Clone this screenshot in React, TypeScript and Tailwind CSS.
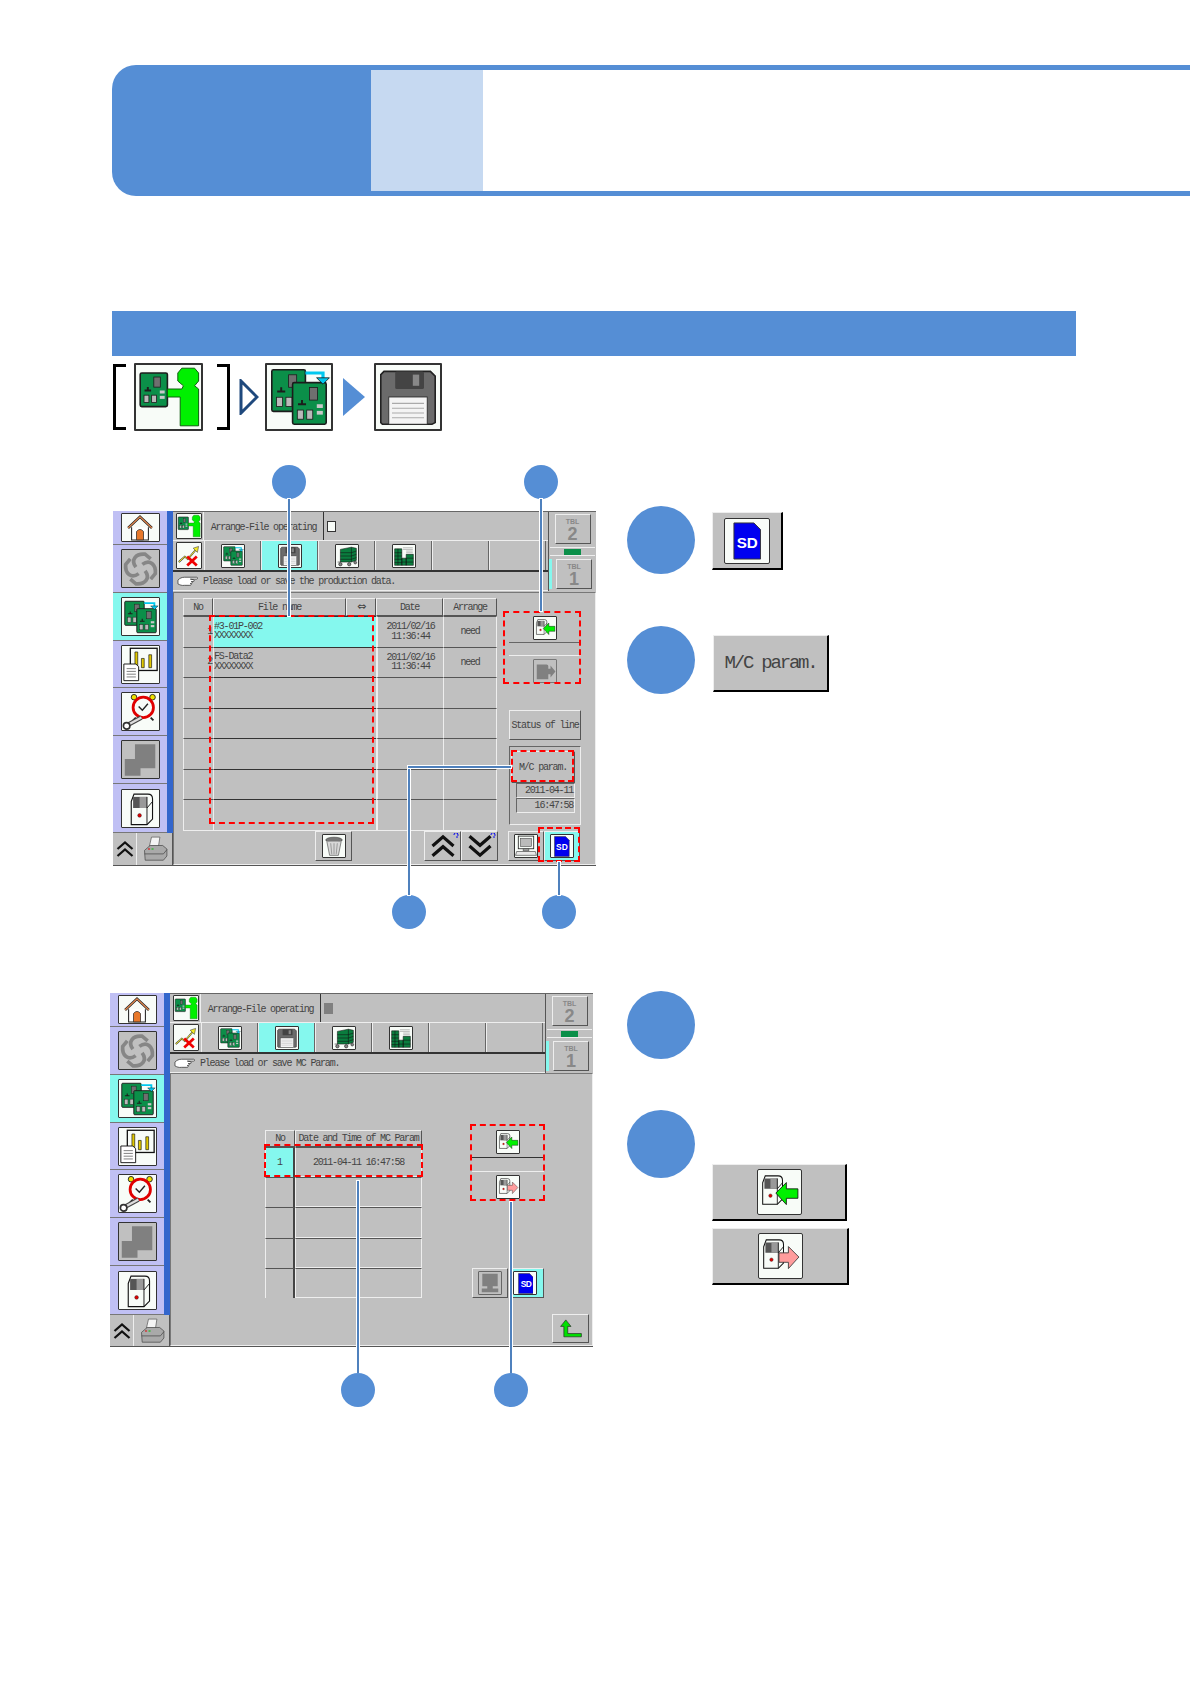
import type { ReactNode } from "react";

const raised = "border border-t-[#eeeeee] border-l-[#eeeeee] border-r-[#555555] border-b-[#555555]";
const mono = "font-['Liberation_Mono',monospace] text-[10px] tracking-[-1.2px] text-[#444444]";

function Ico({ children, size = 38 }: { children: ReactNode; size?: number }) {
  return (
    <svg viewBox="0 0 40 40" width={size} height={size} className="block">
      {children}
    </svg>
  );
}

function Pcb({ x, y, w, h }: { x: number; y: number; w: number; h: number }) {
  return (
    <g>
      <rect x={x} y={y} width={w} height={h} rx="1" fill="#0b8f49" stroke="#1c1c1c" strokeWidth="1" />
      <rect x={x + w * 0.5} y={y + h * 0.12} width={w * 0.24} height={h * 0.3} fill="#6f6f6f" stroke="#1c1c1c" strokeWidth="0.5" />
      <rect x={x + w * 0.14} y={y + h * 0.66} width={w * 0.18} height={h * 0.22} fill="#b9b9b9" stroke="#1c1c1c" strokeWidth="0.5" />
      <rect x={x + w * 0.42} y={y + h * 0.66} width={w * 0.18} height={h * 0.22} fill="#b9b9b9" stroke="#1c1c1c" strokeWidth="0.5" />
      <path d={`M${x + w * 0.16} ${y + h * 0.52}h${w * 0.24}M${x + w * 0.28} ${y + h * 0.52}v-${h * 0.1}`} stroke="#1c1c1c" strokeWidth="1.2" />
      <rect x={x + w * 0.72} y={y + h * 0.52} width={w * 0.18} height={h * 0.09} fill="#c8c8c8" />
      <rect x={x + w * 0.72} y={y + h * 0.68} width={w * 0.18} height={h * 0.09} fill="#c8c8c8" />
    </g>
  );
}

const Person = ({ size = 26 }: { size?: number }) => (
  <Ico size={size}>
    <Pcb x={2} y={5} w={17} h={21} />
    <path d="M28 2h8l2.5 3v5L36 13l2.5 2v23H27V20h-8v-5h9l1-2-3.500-3V5z" fill="#00f000" stroke="#0a5a0a" strokeWidth="0.6" />
  </Ico>
);

const TwoBoards = ({ size = 38 }: { size?: number }) => (
  <Ico size={size}>
    <Pcb x={3} y={3} w={21} h={26} />
    <Pcb x={16} y={11} w={21} h={26} />
    <path d="M24 5h11v5" fill="none" stroke="#00c8f0" strokeWidth="2" />
    <path d="M31 8h8l-4 4z" fill="#00c8f0" stroke="#111" strokeWidth="0.5" />
  </Ico>
);

const Floppy = ({ size = 24 }: { size?: number }) => (
  <Ico size={size}>
    <path d="M3 6l2-2h29l3 3v29l-2 1H4l-1-1z" fill="#6b6b6b" stroke="#222" strokeWidth="1" />
    <rect x="12" y="4" width="18" height="11" rx="1" fill="#444" />
    <rect x="23" y="6" width="4" height="7" fill="#888" />
    <rect x="8" y="20" width="24" height="17" fill="#f4f4f4" stroke="#222" strokeWidth="0.5" />
    <path d="M10 24h20M10 27h20M10 30h20M10 33h20" stroke="#aaa" strokeWidth="0.7" />
  </Ico>
);

const Cart = ({ size = 22 }: { size?: number }) => (
  <Ico size={size}>
    <path d="M8 8 28 4l9 2v22l-9 3H8z" fill="#0a7d3e" stroke="#111" />
    <path d="M8 14h20l9-3M8 20h20l9-3M8 26h20l9-3M28 4v27" stroke="#111" fill="none" />
    <path d="M8 31H3" stroke="#111" />
    <circle cx="8" cy="35" r="3" fill="#888" stroke="#111" />
    <circle cx="24" cy="35" r="3" fill="#888" stroke="#111" />
    <circle cx="35" cy="32" r="2.5" fill="#888" stroke="#111" />
  </Ico>
);

const Trend = ({ size = 24 }: { size?: number }) => (
  <Ico size={size}>
    <path d="M18 5h18M18 8h18M24 11h12M24 14h12" stroke="#888" strokeWidth="1" />
    <path d="M3 7h13v30H3zM16 24h8v13h-8zM24 17h13v20H24z" fill="#0a7d3e" stroke="#111" />
    <path d="M3 14h13M3 20h13M3 26h13M3 32h13M24 24h13M24 31h13M16 31h8M9 7v30" stroke="#111" />
  </Ico>
);

const ExitIcon = () => (
  <Ico size={26}>
    <path d="M3 30 13 21l5 4 13-15" fill="none" stroke="#444" strokeWidth="3" />
    <path d="M3 30 13 21l5 4 13-15" fill="none" stroke="#f4ea20" strokeWidth="1.6" />
    <path d="M27 7l9-3-2 10z" fill="#f4ea20" stroke="#444" />
    <path d="M17 21 33 36M33 21 17 36" stroke="#f00000" strokeWidth="4.5" />
  </Ico>
);

const Home = () => (
  <Ico size={28}>
    <path d="M3 20 20 4l17 16" fill="none" stroke="#222" strokeWidth="3.5" />
    <path d="M3 20 20 4l17 16" fill="none" stroke="#e98a50" strokeWidth="1.6" />
    <path d="M8 19v18h24V19" fill="#fff" stroke="#222" strokeWidth="1.5" />
    <path d="M15 37V25q5-6 10 0v12z" fill="#e8782c" stroke="#222" />
  </Ico>
);

const Fan = () => (
  <Ico>
    <g fill="none" stroke="#868686" strokeWidth="4">
      {[0, 90, 180, 270].map((a) => (
        <path key={a} d="M15 18C9 10 15 3 25 4l6 5" transform={`rotate(${a} 20 20)`} />
      ))}
    </g>
  </Ico>
);

const ReportChart = () => (
  <Ico>
    <rect x="9" y="3" width="29" height="24" fill="#f8fcf8" stroke="#111" strokeWidth="1.4" />
    <path d="M14 24V7h3v17zM21 24V14h3v10zM29 24V10h3v14z" fill="#e0c800" stroke="#111" strokeWidth="0.7" />
    <path d="M2 20h13l3 3v15H2z" fill="#fff" stroke="#111" />
    <path d="M5 25h10M5 28h10M5 31h10M5 34h10" stroke="#555" strokeWidth="0.8" />
  </Ico>
);

const AlarmTool = () => (
  <Ico>
    <circle cx="13" cy="4" r="3" fill="#f0e000" stroke="#222" />
    <circle cx="33" cy="4" r="3" fill="#f0e000" stroke="#222" />
    <circle cx="23" cy="15" r="11" fill="#f8fcf8" stroke="#e00000" strokeWidth="3" />
    <path d="M18 14l4 4 6-7" fill="none" stroke="#222" strokeWidth="1.5" />
    <path d="M15 26l-3 3M31 26l3 3" stroke="#222" strokeWidth="2" />
    <path d="M6 34 21 26" stroke="#444" strokeWidth="5" />
    <path d="M6 34 21 26" stroke="#ddd" strokeWidth="2.5" />
    <circle cx="5" cy="35" r="3.5" fill="#fff" stroke="#333" strokeWidth="1.8" />
  </Ico>
);

const Squares = () => (
  <Ico>
    <path d="M14 3h22v26H20v8H3V19h11z" fill="#808080" />
  </Ico>
);

const MachineShape = ({ x = 7, scale = 1 }: { x?: number; scale?: number }) => (
  <g transform={`translate(${x} 3) scale(${scale})`}>
    <path d="M3 10 6 2h15q5 0 5 5v22l-6 6H3z" fill="#f8fcf8" stroke="#111" strokeWidth="1.2" />
    <path d="M5 5h15v12H5z" fill="#555" />
    <path d="M12 5h8v12h-8z" fill="#999" />
    <path d="M20 5V35M20 17l6-7" stroke="#111" fill="none" />
    <circle cx="12" cy="25" r="2" fill="#e00000" stroke="#333" strokeWidth="0.5" />
  </g>
);

const Load = ({ size = 22 }: { size?: number }) => (
  <Ico size={size}>
    <MachineShape x={2} scale={0.82} />
    <path d="M17 21 27 11v6h11v9H27v6z" fill="#00f000" stroke="#111" strokeWidth="0.8" />
  </Ico>
);

const Save = ({ size = 22 }: { size?: number }) => (
  <Ico size={size}>
    <MachineShape x={2} scale={0.82} />
    <path d="M38 21 28 11v6H19v9h9v6z" fill="#ff9c9c" stroke="#333" strokeWidth="0.8" />
  </Ico>
);

const SaveOff = () => (
  <Ico size={22}>
    <path d="M5 8h18q3 0 3 3v5h4v-6l9 11-9 11v-6h-4v9H5z" fill="#808080" />
  </Ico>
);

const Chevrons = ({ down, size = 28 }: { down?: boolean; size?: number }) => (
  <Ico size={size}>
    <g fill="none" stroke="#111" strokeWidth="4.5" transform={down ? "rotate(180 20 20)" : undefined}>
      <path d="M5 20 20 7l15 13" />
      <path d="M5 34 20 21l15 13" />
    </g>
  </Ico>
);

const Printer = () => (
  <Ico size={28}>
    <path d="M15 3h12l-2 13H12z" fill="#f4f4f4" stroke="#555" />
    <path d="M5 22 13 15h18l6 5v10l-5 6H6z" fill="#a9a9a9" stroke="#444" />
    <path d="M5 27h27l5-6" fill="none" stroke="#444" />
    <path d="M10 20h3" stroke="#e00000" strokeWidth="1.4" />
    <path d="M15 20h3" stroke="#00c000" strokeWidth="1.4" />
  </Ico>
);

const Trash = () => (
  <Ico size={22}>
    <ellipse cx="20" cy="9" rx="15" ry="5" fill="#777" stroke="#333" />
    <path d="M7 12l5 25h16l5-25" fill="#d8d8d8" stroke="#333" />
    <path d="M14 15l2 20M20 15v20M26 15l-2 20" stroke="#666" />
  </Ico>
);

const Computer = ({ off }: { off?: boolean }) => (
  <Ico size={22}>
    {off ? (
      <path d="M6 3h28v23h-9v4h10v7H5v-7h10v-4H6z" fill="#808080" />
    ) : (
      <>
        <rect x="6" y="2" width="28" height="23" fill="#f8fcf8" stroke="#222" strokeWidth="1.5" />
        <rect x="10" y="6" width="20" height="15" fill="#bbb" stroke="#444" />
        <path d="M15 25h10v4H15z" fill="#aaa" stroke="#333" />
        <path d="M3 30h34l2 7H1z" fill="#e8e8e8" stroke="#222" />
      </>
    )}
  </Ico>
);

function SdCard({ size = 21 }: { size?: number }) {
  return (
    <svg viewBox="0 0 30 40" width={size * 0.75} height={size} className="block">
      <path d="M1 1h21l7 7v31H1z" fill="#0000f0" stroke="#333" strokeWidth="1" />
      <text x="15" y="27" textAnchor="middle" fontSize="16" fontWeight="700" fill="#fff" fontFamily="'Liberation Sans', sans-serif">
        SD
      </text>
    </svg>
  );
}

const Hand = () => (
  <svg viewBox="0 0 22 12" width="21" height="12" className="block shrink-0">
    <path
      d="M1 4C3 2 5 1 8 1h12.5a1 1 0 0 1 0 2H14l3 .5a1 1 0 0 1 0 2h-2a1 1 0 0 1 0 2h-1a1 1 0 0 1-.5 2H8C5 10 3 9 1 8z"
      fill="#fff"
      stroke="#333"
      strokeWidth="0.8"
    />
  </svg>
);

const ReturnArrow = () => (
  <Ico size={26}>
    <path d="M12 6 4 16h5v16h27v-5H15V16h5z" fill="#00e000" stroke="#222" strokeWidth="1" />
  </Ico>
);

const Hook = () => (
  <svg viewBox="0 0 6 6" width="6" height="6" className="absolute right-[1px] top-[1px] block">
    <path d="M1 2a2 2 0 1 1 3 1.500V5" fill="none" stroke="#0000f0" strokeWidth="1" />
  </svg>
);

function Frame({ children, className = "", bg = "bg-[#f8fcf8]" }: { children: ReactNode; className?: string; bg?: string }) {
  return (
    <div className={`flex items-center justify-center overflow-hidden rounded-[1px] border border-[#333333] ${bg} ${className}`}>
      {children}
    </div>
  );
}

function Dot({ className }: { className: string }) {
  return <div className={`absolute h-[34px] w-[34px] rounded-full bg-[#558ed5] ${className}`} />;
}

function Line({ className }: { className: string }) {
  return <div className={`absolute bg-[#4f81bd] shadow-[0_0_0_1px_#ffffff] ${className}`} />;
}

function Sidebar() {
  const rows = [
    { h: "h-[34px]", icon: <Home />, box: "h-[29px]" },
    { h: "h-[48px]", icon: <Fan />, box: "h-[39px]", off: true },
    { h: "h-[48px]", icon: <TwoBoards />, box: "h-[39px]", on: true },
    { h: "h-[47px]", icon: <ReportChart />, box: "h-[39px]" },
    { h: "h-[48px]", icon: <AlarmTool />, box: "h-[39px]" },
    { h: "h-[48px]", icon: <Squares />, box: "h-[39px]", off: true },
    { h: "h-[49px]", icon: <Ico><MachineShape /></Ico>, box: "h-[39px]" },
  ];
  return (
    <div className="flex h-full w-[60px] shrink-0 flex-col">
      <div className="flex flex-1 flex-col border-r-[6px] border-[#3366cc]">
        {rows.map((r, i) => (
          <div
            key={i}
            className={`flex items-center justify-center border-b border-[#777777] ${r.h} ${r.on ? "bg-[#85f8ee]" : "bg-[#c0c0f4]"}`}
          >
            <Frame className={`w-[39px] ${r.box}`} bg={r.off ? "bg-[#c0c0c0]" : "bg-[#f8fcf8]"}>
              {r.icon}
            </Frame>
          </div>
        ))}
      </div>
      <div className="flex h-[32px] border-r border-[#555555] bg-[#c0c0c0]">
        <div className="flex w-[24px] items-center justify-center border-r border-[#eeeeee]">
          <Chevrons size={20} />
        </div>
        <div className="flex flex-1 items-center justify-center">
          <Printer />
        </div>
      </div>
    </div>
  );
}

function TblButton({ n, on }: { n: string; on?: boolean }) {
  return (
    <div className={`flex flex-1 justify-center ${on ? "border-l-[3px] border-[#85f8ee]" : ""}`}>
      <div className={`flex w-[36px] flex-col items-center ${raised} font-['Liberation_Sans',sans-serif] font-bold leading-none text-[#888888]`}>
        <span className="mt-[3px] text-[7px]">TBL</span>
        <span className="text-[18px]">{n}</span>
      </div>
    </div>
  );
}

function TopBars({ msg, docDim }: { msg: string; docDim?: boolean }) {
  const tabs = [
    <TwoBoards key="a" size={24} />,
    <Floppy key="b" />,
    <Cart key="c" />,
    <Trend key="d" />,
    null,
    null,
  ];
  return (
    <div className="flex shrink-0 border-t border-[#666666]">
      <div className="flex w-[375px] flex-col">
        <div className="flex h-[29px] border-b border-[#eeeeee]">
          <Frame className="my-[1px] ml-[3px] mr-[1px] h-[26px] w-[26px] border-[#00a000]">
            <Person />
          </Frame>
          <div className={`flex w-[121px] items-center justify-center border-x border-l-[#eeeeee] border-r-[#333333] pt-[2px] ${mono}`}>
            Arrange-File operating
          </div>
          <div className="flex items-center pl-[3px]">
            {docDim ? (
              <div className="h-[11px] w-[9px] bg-[#808080]" />
            ) : (
              <div className="h-[11px] w-[9px] border border-[#333333] bg-[#f8fcf8]" />
            )}
          </div>
        </div>
        <div className="flex h-[31px] border-b-2 border-[#333333]">
          <Frame className="my-[1px] ml-[3px] mr-[2px] w-[26px]">
            <ExitIcon />
          </Frame>
          {tabs.map((icon, i) => (
            <div
              key={i}
              className={`flex h-full w-[57px] items-center justify-center border-r border-l border-l-[#eeeeee] border-r-[#666666] ${i === 1 ? "bg-[#85f8ee]" : ""}`}
            >
              {icon && <Frame className="h-[24px] w-[24px]">{icon}</Frame>}
            </div>
          ))}
        </div>
        <div className={`flex h-[19px] items-center gap-[5px] border-b border-[#eeeeee] pl-[4px] pt-[1px] ${mono}`}>
          <Hand />
          {msg}
        </div>
      </div>
      <div className="flex w-[48px] flex-col border-l border-[#555555] py-[2px]">
        <TblButton n="2" />
        <div className="mx-[1px] my-[3px] flex h-[9px] items-center justify-center border-y border-[#eeeeee]">
          <div className="h-[6px] w-[17px] bg-[#0b8f49]" />
        </div>
        <TblButton n="1" on />
      </div>
    </div>
  );
}

function Cell({ className = "", children }: { className?: string; children?: ReactNode }) {
  return (
    <div className={`flex items-center justify-center border-l border-t border-l-[#eeeeee] border-t-[#555555] ${className}`}>
      {children}
    </div>
  );
}

function Screen1() {
  const rows = [0, 1, 2, 3, 4, 5, 6];
  return (
    <div className="relative h-[355px] w-[483px] shrink-0 border-b border-[#555555] bg-[#c0c0c0]">
      <div className="flex h-full">
        <Sidebar />
        <div className="flex min-w-0 flex-1 flex-col">
          <TopBars msg="Please load or save the production data." />
          <div className="mt-[1px] flex flex-1 flex-col border border-t-[#777777] border-l-[#777777] border-r-[#eeeeee] border-b-[#eeeeee]">
            <div className="flex h-[236px]">
              <div className={`ml-[9px] mt-[5px] ${mono}`}>
                <div className="grid grid-cols-[30px_133px_30px_67px_54px] grid-rows-[18px]">
                  <Cell className={raised}>No</Cell>
                  <Cell className={raised}>File name</Cell>
                  <Cell className={`${raised} font-['DejaVu_Sans',sans-serif] text-[11px]`}>⇔</Cell>
                  <Cell className={raised}>Date</Cell>
                  <Cell className={raised}>Arrange</Cell>
                </div>
                <div className="border-b border-[#eeeeee]">
                  {rows.map((r) => (
                    <div key={r} className="grid h-[30.5px] grid-cols-[30px_133px_30px_67px_54px]">
                      <Cell className="justify-end pb-[1px] pr-[1px]">{r < 2 ? r + 1 : ""}</Cell>
                      <div className={`col-span-2 flex flex-col justify-center border-l border-t border-l-[#eeeeee] border-t-[#333333] pb-[1px] leading-[9.5px] ${r === 0 ? "bg-[#85f8ee]" : ""}`}>
                        {r === 0 && <><span>#3-01P-002</span><span>XXXXXXXX</span></>}
                        {r === 1 && <><span>FS-Data2</span><span>XXXXXXXX</span></>}
                      </div>
                      <Cell className="flex-col border-l-2 border-l-[#666666] leading-[9.5px]">
                        {r < 2 && <><span>2011/02/16</span><span>11:36:44</span></>}
                      </Cell>
                      <Cell className="border-r border-r-[#eeeeee]">{r < 2 ? "need" : ""}</Cell>
                    </div>
                  ))}
                </div>
              </div>
              <div className={`ml-[12px] flex w-[72px] flex-col pt-[20px] ${mono}`}>
                <div className="flex h-[30px] items-center justify-center border-b border-b-[#666666]">
                  <Frame className="h-[24px] w-[24px]"><Load /></Frame>
                </div>
                <div className="mt-[12px] flex h-[30px] items-center justify-center border-t border-[#eeeeee]">
                  <Frame className="h-[24px] w-[24px] border-[#777777]" bg="bg-[#c0c0c0]"><SaveOff /></Frame>
                </div>
                <div className={`mt-[25px] flex h-[30px] items-center justify-center ${raised}`}>Status of line</div>
                <div className="mt-[6px] flex h-[79px] flex-col items-end border border-[#666666] border-r-[#eeeeee] border-b-[#eeeeee] pr-[5px] pt-[4px]">
                  <div className={`flex h-[32px] w-[64px] items-center justify-center ${raised}`}>M/C param.</div>
                  <div className="flex h-[15px] w-[59px] items-center justify-end border border-[#666666] border-r-[#eeeeee] border-b-[#eeeeee] pr-[1px]">2011-04-11</div>
                  <div className="flex h-[15px] w-[59px] items-center justify-end border border-[#666666] border-r-[#eeeeee] border-b-[#eeeeee] pr-[1px]">16:47:58</div>
                </div>
              </div>
            </div>
            <div className="mt-[2px] flex items-start pl-[141px]">
              <div className={`flex h-[30px] w-[37px] items-center justify-center ${raised}`}>
                <Frame className="h-[24px] w-[24px]"><Trash /></Frame>
              </div>
              <div className={`relative ml-[72px] flex h-[30px] w-[37px] items-center justify-center ${raised}`}>
                <Chevrons />
                <Hook />
              </div>
              <div className={`relative flex h-[30px] w-[37px] items-center justify-center ${raised}`}>
                <Chevrons down />
                <Hook />
              </div>
              <div className={`ml-[10px] flex h-[30px] w-[36px] items-center justify-center ${raised}`}>
                <Frame className="h-[24px] w-[24px]"><Computer /></Frame>
              </div>
              <div className={`flex h-[30px] w-[36px] items-center justify-center bg-[#85f8ee] ${raised}`}>
                <Frame className="h-[24px] w-[24px]"><SdCard /></Frame>
              </div>
            </div>
          </div>
        </div>
      </div>
      <div className="absolute left-[96px] top-[104px] h-[209px] w-[165px] border-2 border-dashed border-[#ff0000]" />
      <div className="absolute left-[390px] top-[100px] h-[73px] w-[78px] border-2 border-dashed border-[#ff0000]" />
      <div className="absolute left-[398px] top-[239px] h-[32px] w-[63px] border-2 border-dashed border-[#ff0000]" />
      <div className="absolute left-[425px] top-[316px] h-[35px] w-[42px] border-2 border-dashed border-[#ff0000]" />
      <Dot className="left-[159px] top-[-46px]" />
      <Line className="left-[175px] top-[-12px] h-[117px] w-[1.5px]" />
      <Dot className="left-[411px] top-[-46px]" />
      <Line className="left-[427px] top-[-12px] h-[112px] w-[1.5px]" />
      <Dot className="left-[279px] top-[384px]" />
      <Line className="left-[295px] top-[255px] h-[129px] w-[1.5px]" />
      <Line className="left-[295px] top-[255px] h-[1.5px] w-[103px]" />
      <Dot className="left-[429px] top-[384px]" />
      <Line className="left-[445px] top-[351px] h-[33px] w-[1.5px]" />
    </div>
  );
}

function Screen2() {
  const rows = [0, 1, 2, 3, 4];
  return (
    <div className="relative h-[354px] w-[483px] shrink-0 border-b border-[#555555] bg-[#c0c0c0]">
      <div className="flex h-full">
        <Sidebar />
        <div className="flex min-w-0 flex-1 flex-col">
          <TopBars msg="Please load or save MC Param." docDim />
          <div className="flex flex-1 flex-col border border-t-[#777777] border-b-[#eeeeee] border-l-[#777777] border-r-[#eeeeee]">
            <div className={`flex h-[237px] ${mono}`}>
              <div className="ml-[94px] mt-[56px]">
                <div className="grid grid-cols-[30px_127px] grid-rows-[17px]">
                  <Cell className={raised}>No</Cell>
                  <Cell className={raised}>Date and Time of MC Param</Cell>
                </div>
                {rows.map((r) => (
                  <div key={r} className="grid h-[30.2px] grid-cols-[30px_127px]">
                    <Cell className={`border-r-2 border-r-[#444444] ${r === 0 ? "bg-[#85f8ee]" : ""}`}>{r === 0 ? "1" : ""}</Cell>
                    <Cell className="border-b border-r border-b-[#eeeeee] border-r-[#eeeeee]">{r === 0 ? "2011-04-11 16:47:58" : ""}</Cell>
                  </div>
                ))}
              </div>
              <div className="ml-[50px] mt-[53px] flex w-[72px] flex-col">
                <div className="flex h-[31px] items-center justify-center border-b border-[#333333]">
                  <Frame className="h-[24px] w-[24px]"><Load /></Frame>
                </div>
                <div className="mt-[13px] flex h-[30px] items-center justify-center border-t border-[#eeeeee]">
                  <Frame className="h-[24px] w-[24px]"><Save /></Frame>
                </div>
                <div className="mt-[67px] flex">
                  <div className={`flex h-[30px] w-[37px] items-center justify-center ${raised}`}>
                    <Frame className="h-[24px] w-[24px] border-[#666666]" bg="bg-[#c0c0c0]"><Computer off /></Frame>
                  </div>
                  <div className={`ml-[4px] flex h-[30px] w-[32px] items-center justify-start bg-[#85f8ee] ${raised}`}>
                    <Frame className="h-[24px] w-[24px]"><SdCard /></Frame>
                  </div>
                </div>
              </div>
            </div>
            <div className="flex justify-end pr-[3px] pt-[3px]">
              <div className={`flex h-[29px] w-[37px] items-center justify-center ${raised}`}>
                <ReturnArrow />
              </div>
            </div>
          </div>
        </div>
      </div>
      <div className="absolute left-[154px] top-[151px] h-[33px] w-[159px] border-2 border-dashed border-[#ff0000]" />
      <div className="absolute left-[360px] top-[131px] h-[77px] w-[75px] border-2 border-dashed border-[#ff0000]" />
      <Line className="left-[247px] top-[188px] h-[192px] w-[1.5px]" />
      <Dot className="left-[231px] top-[380px]" />
      <Line className="left-[400px] top-[209px] h-[171px] w-[1.5px]" />
      <Dot className="left-[384px] top-[380px]" />
    </div>
  );
}

const Step = () => <div className="h-[68px] w-[68px] shrink-0 rounded-full bg-[#558ed5]" />;

function BigButton({ children, className }: { children: ReactNode; className: string }) {
  return (
    <div className={`flex items-center justify-center border-b-2 border-l border-r-2 border-t border-b-black border-l-[#eeeeee] border-r-black border-t-[#eeeeee] bg-[#c0c0c0] ${className}`}>
      {children}
    </div>
  );
}

export default function App() {
  return (
    <div className="h-[1684px] w-[1190px] overflow-hidden bg-white pl-[112px] pt-[65px]">
      <div className="flex h-[131px] w-[1078px]">
        <div className="w-[259px] rounded-l-[24px] bg-[#558ed5]" />
        <div className="flex-1 border-y-[5px] border-[#558ed5]">
          <div className="h-full w-[112px] bg-[#c6d9f1]" />
        </div>
      </div>

      <div className="mt-[115px] h-[45px] w-[964px] bg-[#558ed5]" />

      <div className="mt-[6px] flex h-[70px] items-center">
        <div className="ml-[1px] h-[66px] w-[13px] border-y-[3px] border-l-[3px] border-black" />
        <Frame className="ml-[8px] h-[68px] w-[69px] border-2 border-[#00a000]">
          <Person size={64} />
        </Frame>
        <div className="ml-[14px] h-[66px] w-[13px] border-y-[3px] border-r-[3px] border-black" />
        <svg viewBox="0 0 20 36" width="20" height="36" className="ml-[9px] block">
          <path d="M2 2 18 18 2 34z" fill="#fff" stroke="#1f497d" strokeWidth="3" />
        </svg>
        <Frame className="ml-[6px] h-[68px] w-[68px] border-2">
          <TwoBoards size={64} />
        </Frame>
        <svg viewBox="0 0 22 38" width="22" height="38" className="ml-[10px] block">
          <path d="M0 0 22 19 0 38z" fill="#558ed5" />
        </svg>
        <Frame className="ml-[9px] h-[68px] w-[68px] border-2">
          <Floppy size={64} />
        </Frame>
      </div>

      <div className="ml-[1px] mt-[79px] flex">
        <Screen1 />
        <div className="ml-[31px] mt-[-5px] flex flex-col gap-[52px]">
          <div className="flex gap-[17px]">
            <Step />
            <BigButton className="mt-[6px] h-[58px] w-[71px]">
              <Frame className="h-[46px] w-[46px] rounded-[2px]"><SdCard size={38} /></Frame>
            </BigButton>
          </div>
          <div className="flex gap-[18px]">
            <Step />
            <BigButton className="mt-[9px] h-[57px] w-[116px] font-['Liberation_Mono',monospace] text-[19px] tracking-[-2.2px] text-[#444444]">M/C param.</BigButton>
          </div>
        </div>
      </div>

      <div className="ml-[-2px] mt-[127px] flex">
        <Screen2 />
        <div className="ml-[34px] mt-[-2px] flex flex-col gap-[51px]">
          <Step />
          <div className="flex gap-[17px]">
            <Step />
            <div className="mt-[54px] flex flex-col gap-[7px]">
              <BigButton className="h-[57px] w-[135px]">
                <Frame className="h-[46px] w-[45px] rounded-[2px]"><Load size={42} /></Frame>
              </BigButton>
              <BigButton className="h-[57px] w-[137px]">
                <Frame className="h-[46px] w-[45px] rounded-[2px]"><Save size={42} /></Frame>
              </BigButton>
            </div>
          </div>
        </div>
      </div>
    </div>
  );
}
